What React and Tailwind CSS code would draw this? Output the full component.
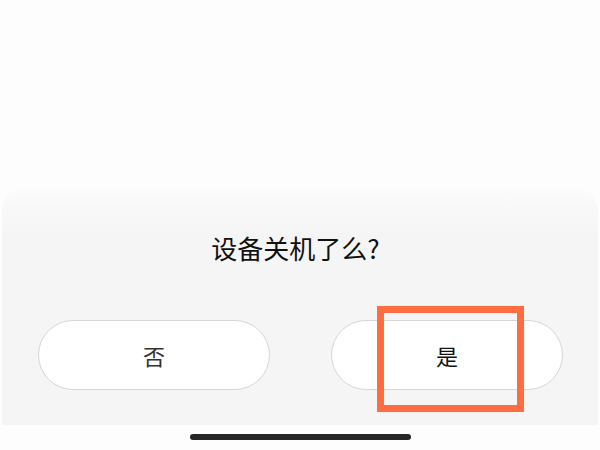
export default function App() {
  return (
    <div
      className="relative w-[600px] h-[450px] bg-[#fdfdfd] flex flex-col overflow-hidden"
      style={{ fontFamily: '"Noto Sans CJK SC", "Noto Sans", sans-serif' }}
    >
      <div className="h-[188px] shrink-0" />
      <div className="h-[237px] shrink-0 mx-[2px] rounded-t-[22px] bg-gradient-to-b from-[#fbfbfb] to-[#f5f5f5] to-[20%] flex flex-col items-center">
        <div className="mt-[43px] mr-[9px] h-[34px] flex items-center text-[26px] leading-none text-[#111]">
          设备关机了么?
        </div>
        <div className="mt-[55px] w-full flex justify-between pl-[36px] pr-[35px]">
          <button className="w-[232px] h-[70px] rounded-full bg-white border border-[#d6d6d6] text-[22px] text-[#333] flex items-center justify-center">
            否
          </button>
          <button className="w-[232px] h-[70px] rounded-full bg-white border border-[#d6d6d6] text-[22px] text-[#111] flex items-center justify-center">
            是
          </button>
        </div>
      </div>
      <div className="flex-1 flex items-start justify-center pt-[9px]">
        <div className="w-[221px] h-[6px] rounded-full bg-[#262626]" />
      </div>
      <div className="absolute left-[377px] top-[306px] w-[147px] h-[106px] border-[7px] border-[#ff6d40]" />
    </div>
  );
}
